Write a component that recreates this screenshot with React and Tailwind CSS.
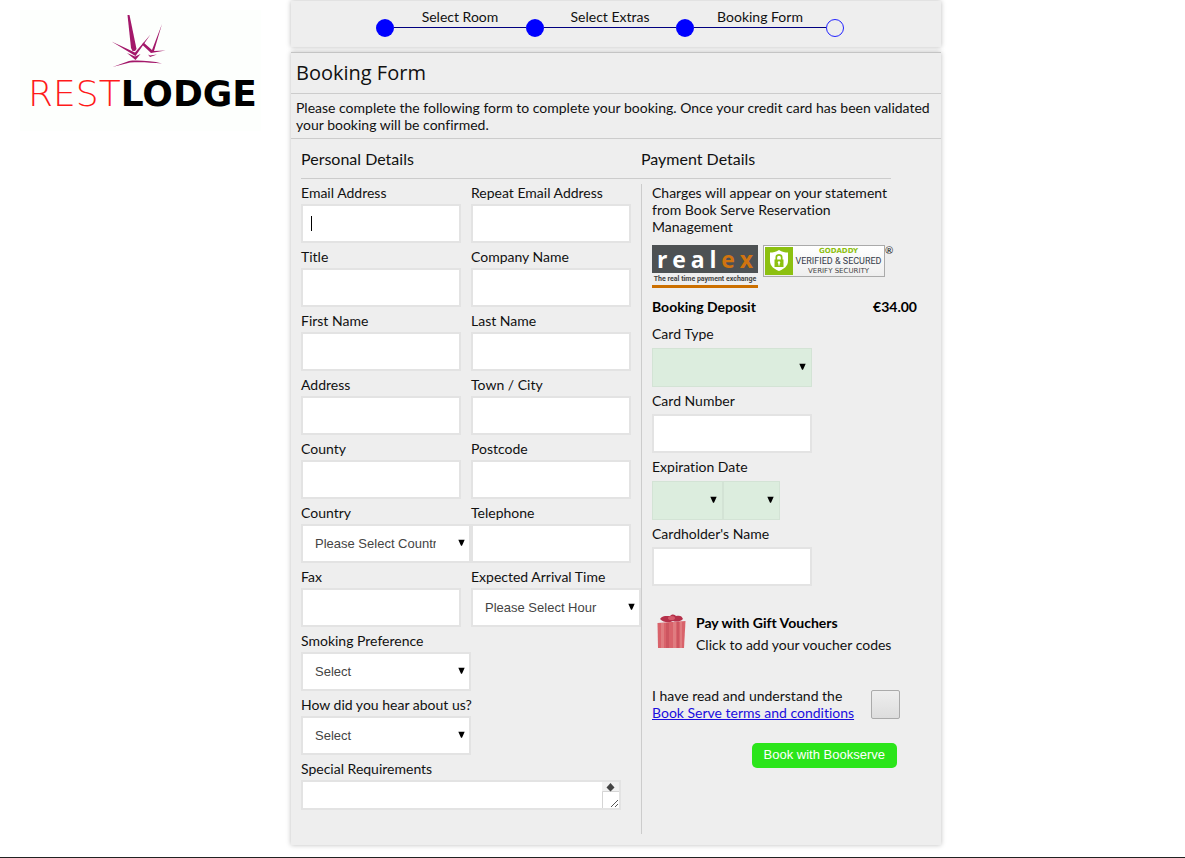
import React from "react";

const control = "h-[39px] border-2 border-[#e3e3e3] bg-white outline-none";

function Arrow() {
  return (
    <svg viewBox="0 0 7 7" className="pointer-events-none absolute top-[15px] right-[6px] size-[7px]" aria-hidden="true">
      <path d="M.300 .800h6.400L4 6.800H3z" fill="#000" />
    </svg>
  );
}

function Label({ id, gap = "mb-0.5", children }) {
  return (
    <label htmlFor={id} className={"block text-sm leading-[18px] whitespace-nowrap " + gap}>
      {children}
    </label>
  );
}

function TextField({ id, label, gap, caret }) {
  return (
    <div>
      <Label id={id} gap={gap}>{label}</Label>
      <div className="relative">
        <input id={id} type="text" className={control + " block w-[160px] px-2 text-sm"} />
        {caret && <span className="pointer-events-none absolute top-3 left-[10px] h-[15px] w-px bg-black" />}
      </div>
    </div>
  );
}

function SelectField({ id, label, value }) {
  return (
    <div>
      <Label id={id}>{label}</Label>
      <div className="relative w-[170px]">
        <select
          id={id}
          className={control + " block w-full appearance-none pr-[33px] pl-3 font-['Liberation_Sans',Arial,sans-serif] text-[13px] text-[#444]"}
        >
          <option>{value}</option>
        </select>
        <Arrow />
      </div>
    </div>
  );
}

function GreenSelect({ id, name, width }) {
  return (
    <div className={"relative " + width}>
      <select id={id} aria-label={name} className="block h-[39px] w-full appearance-none border border-[#d3e3d5] bg-[#dcedde] outline-none">
        <option></option>
      </select>
      <Arrow />
    </div>
  );
}

function Logo() {
  return (
    <a href="#" className="flex h-[121px] w-[241px] flex-col items-center bg-[#fdfffd] no-underline">
      <svg viewBox="0 0 61 55" className="mt-[3px] h-[55px] w-[61px] shrink-0" aria-hidden="true">
        <g fill="#a3186a">
          <path d="M17.500 2h2L26.500 36l-1.500 2h-2.500l-1.500-3z" />
          <path d="M1.500 28.500L25 39.500 40.500 21.500 25.500 43z" />
          <path d="M32 31.500l1.500-2L42 37 52 11 44 38l11.500-.5L41 40z" />
          <path d="M17 40l8 3.500 5.500-2.500-5 6z" />
          <path d="M38 41.500l2 1 7-1-7 2.500z" />
          <path d="M2.500 54L19 48c6-1 22-.5 33 2.500-11-1-22-1.800-32-1z" />
        </g>
      </svg>
      <span className="flex items-baseline pl-1 font-['DejaVu_Sans',sans-serif] text-[36px] leading-[52px]">
        <span className="font-extralight text-[#ff1a1a]">REST</span>
        <span className="font-bold text-black">LODGE</span>
      </span>
    </a>
  );
}

function Steps() {
  const steps = ["Select Room", "Select Extras", "Booking Form"];
  return (
    <nav className="mt-px flex h-[46px] items-start bg-[#eee] pt-2 pl-[85px] shadow-[0_0_5px_#bbb]">
      {steps.map((s) => (
        <React.Fragment key={s}>
          <span className="mt-[10px] size-[18px] shrink-0 rounded-full bg-[#00f]" />
          <a href="#" className="w-[132px] border-b border-[#000080] pb-0.5 text-center text-sm leading-4 text-[#111]">
            {s}
          </a>
        </React.Fragment>
      ))}
      <span className="mt-[10px] size-[18px] shrink-0 rounded-full border border-[#22f]" />
    </nav>
  );
}

function Badges() {
  return (
    <div className="mt-2 flex items-start gap-[5px]">
      <div className="w-[106px] border-b-[3px] border-[#cc7000]">
        <div className="flex h-7 items-center justify-between bg-[#4d5153] px-[5px] font-['Open_Sans',sans-serif] text-[23px] leading-7 font-bold text-white">
          <span>r</span><span>e</span><span>a</span><span>l</span>
          <span className="text-[#d07410]">e</span><span className="text-[#d07410]">x</span>
        </div>
        <div className="h-3 text-center font-['Roboto',sans-serif] text-[7px] leading-[12px] font-bold whitespace-nowrap text-[#444]">
          The real time payment exchange
        </div>
      </div>
      <div className="flex items-start">
        <div className="flex h-8 w-[122px] items-center border border-[#aaa] bg-gradient-to-b from-white to-[#eee] pl-px">
          <svg viewBox="0 0 28 28" className="size-7 shrink-0" aria-hidden="true">
            <path fill="#8cc010" d="M0 0h28v28H0z" />
            <path fill="#fff" d="M14 3c3 2 6 2.500 9 2.500V14c0 5-4 8-9 10-5-2-9-5-9-10V5.500C8 5.500 11 5 14 3z" />
            <path fill="#8cc010" d="M9.500 12.500h9V20h-9z" />
            <path fill="none" stroke="#8cc010" strokeWidth="1.700" d="M11.300 13v-2.500a2.700 2.700 0 0 1 5.400 0V13" />
            <circle cx="14" cy="15.500" r="1.200" fill="#fff" />
            <path fill="#fff" d="M13.400 15.500h1.200V18.500h-1.200z" />
          </svg>
          <div className="flex flex-1 flex-col items-center whitespace-nowrap">
            <span className="font-['DejaVu_Sans',sans-serif] text-[7px] leading-[9px] font-bold text-[#8cc010]">GODADDY</span>
            <span className="font-['Roboto',sans-serif] text-[9px] leading-[11px] text-[#333b48]">VERIFIED &amp; SECURED</span>
            <span className="font-['DejaVu_Sans',sans-serif] text-[7px] leading-[9px] text-[#444]">VERIFY SECURITY</span>
          </div>
        </div>
        <span className="text-[10px] leading-[10px]">®</span>
      </div>
    </div>
  );
}

function Gift() {
  return (
    <svg viewBox="0 0 29 34" className="h-[34px] w-[29px] shrink-0" aria-hidden="true">
      <path fill="#d9636b" d="M.5 9l28-2-1.500 27H1z" />
      <path fill="#e07c80" d="M4 9h3v25H4zM16 8h3v26h-3zM23 8h2v26h-2z" />
      <path fill="#cd5560" d="M9 9h3v25H9zM20 8h2v26h-2z" />
      <path fill="#b5304a" d="M3 5c2-4 8-3 10-3 3-3 5-1 6 0 4-1 6 0 7 3-3 3-7 3-10 2-4 2-9 2-13-2z" />
      <ellipse cx="14.500" cy="4" rx="3.500" ry="2" fill="#d45a6b" />
    </svg>
  );
}

export default function App() {
  return (
    <div className="flex min-h-screen flex-col bg-white font-['Lato',sans-serif] text-[#111] [font-variant-ligatures:none]">
      <div className="flex flex-1 items-start">
        <header className="w-[291px] shrink-0 pt-[10px] pl-5">
          <Logo />
        </header>
        <main className="w-full max-w-[650px]">
          <Steps />
          <form className="mt-[5px] mb-3 border-t border-[#c4c4c4] bg-[#eee] pb-[11px] shadow-[0_0_5px_#bbb]" onSubmit={(e) => e.preventDefault()}>
            <h1 className="h-[41px] border-b border-[#ccc] px-[5px] font-['Open_Sans',sans-serif] text-xl leading-10">Booking Form</h1>
            <p className="border-b border-[#ccc] px-[5px] py-[5px] text-sm leading-[17px]">
              Please complete the following form to complete your booking. Once your credit card has been validated your booking will be confirmed.
            </p>
            <div className="mr-[50px] ml-[10px] flex h-10 border-b border-[#ccc] text-base leading-10">
              <h2 className="w-[340px]">Personal Details</h2>
              <h2>Payment Details</h2>
            </div>
            <div className="mt-[5px] ml-[10px] flex">
              <section className="grid w-[340px] shrink-0 grid-cols-2 content-start gap-y-[5px]">
                <TextField id="email" label="Email Address" caret />
                <TextField id="email2" label="Repeat Email Address" />
                <TextField id="title" label="Title" />
                <TextField id="company" label="Company Name" />
                <TextField id="first" label="First Name" />
                <TextField id="last" label="Last Name" />
                <TextField id="address" label="Address" />
                <TextField id="town" label="Town / City" />
                <TextField id="county" label="County" />
                <TextField id="postcode" label="Postcode" />
                <SelectField id="country" label="Country" value="Please Select Country" />
                <TextField id="phone" label="Telephone" />
                <TextField id="fax" label="Fax" />
                <SelectField id="arrival" label="Expected Arrival Time" value="Please Select Hour" />
                <div className="col-span-2">
                  <SelectField id="smoking" label="Smoking Preference" value="Select" />
                </div>
                <div className="col-span-2">
                  <SelectField id="hear" label="How did you hear about us?" value="Select" />
                </div>
                <div className="col-span-2">
                  <Label id="special">Special Requirements</Label>
                  <div className="relative w-[320px]">
                    <textarea id="special" className="block h-[30px] w-full resize-none overflow-hidden border-2 border-[#e3e3e3] bg-white outline-none" />
                    <svg viewBox="0 0 17 26" className="pointer-events-none absolute top-0.5 right-0.5 h-[26px] w-[17px]" aria-hidden="true">
                      <path fill="#f1f1f1" d="M0 0h17v10H0z" />
                      <path fill="none" stroke="#d5d5d5" d="M.5 26V9.500H17" />
                      <path fill="#444" d="M8.500 1l4 4.500-4 4-4-4z" />
                      <path stroke="#555" d="M9 25l7-7M13 25l3-3" />
                    </svg>
                  </div>
                </div>
              </section>

              <section className="min-h-[650px] w-[299px] border-l border-[#ccc] pl-[10px] text-sm">
                <p className="w-[245px] leading-[17px]">
                  Charges will appear on your statement from Book Serve Reservation Management
                </p>
                <div className="pt-0.5">
                  <Badges />
                </div>
                <div className="mt-[10px] mr-[23px] flex justify-between leading-[18px] font-bold text-black">
                  <span>Booking Deposit</span>
                  <span>€34.00</span>
                </div>
                <div className="mt-[9px] flex flex-col gap-[5px]">
                  <div>
                    <Label id="cardtype" gap="mb-[5px]">Card Type</Label>
                    <GreenSelect id="cardtype" name="Card Type" width="w-[160px]" />
                  </div>
                  <TextField id="cardno" label="Card Number" gap="mb-1" />
                  <div>
                    <Label id="month" gap="mb-[5px]">Expiration Date</Label>
                    <div className="flex">
                      <GreenSelect id="month" name="Expiration month" width="w-[71px]" />
                      <GreenSelect id="year" name="Expiration year" width="w-[57px]" />
                    </div>
                  </div>
                  <TextField id="holder" label="Cardholder's Name" gap="mb-1" />
                </div>
                <a href="#" className="mt-7 flex gap-[10px] pl-[5px]">
                  <Gift />
                  <span className="flex flex-col leading-[22px]">
                    <span className="-mt-0.5 font-bold text-black">Pay with Gift Vouchers</span>
                    <span>Click to add your voucher codes</span>
                  </span>
                </a>
                <div className="mt-[31px] flex items-center justify-between pr-10">
                  <label htmlFor="terms" className="leading-[17px]">
                    I have read and understand the
                    <br />
                    <a href="#" className="text-[#1a0dde] underline">Book Serve terms and conditions</a>
                  </label>
                  <input id="terms" type="checkbox" className="size-[29px] appearance-none rounded-xs border border-[#aaa] bg-gradient-to-b from-[#eee] to-[#ddd]" />
                </div>
                <div className="mt-[22px] flex justify-end pr-[43px]">
                  <button type="submit" className="h-[25px] rounded-[5px] bg-[#2be51a] px-3 font-['Liberation_Sans',Arial,sans-serif] text-[13px] text-white">
                    Book with Bookserve
                  </button>
                </div>
              </section>
            </div>
          </form>
        </main>
      </div>
      <footer className="h-px bg-[#222]" />
    </div>
  );
}
